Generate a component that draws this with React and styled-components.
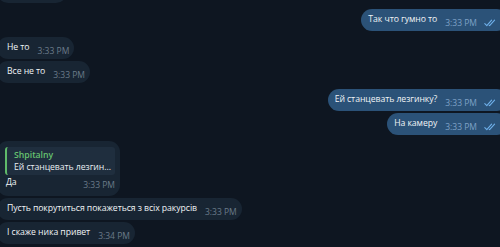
import React from "react";
import styled, { createGlobalStyle } from "styled-components";

const Global = createGlobalStyle`
  html, body { margin: 0; padding: 0; background: #0e1621; }
  body { width: 500px; height: 247px; overflow: hidden; }
  * { box-sizing: border-box; }
`;

const Chat = styled.div`
  width: 500px;
  height: 247px;
  overflow: hidden;
  background: #0e1621;
  display: flex;
  flex-direction: column;
  font-family: "Open Sans", "Noto Sans", sans-serif;
`;

const Row = styled.div`
  display: flex;
  justify-content: ${(p) => (p.$out ? "flex-end" : "flex-start")};
  margin-top: ${(p) => (p.$first ? "6px" : "2px")};
  margin-left: ${(p) => (p.$out ? "0" : "-3px")};
  margin-right: ${(p) => (p.$out ? "-8px" : "0")};
`;

const Bubble = styled.div`
  display: flex;
  align-items: flex-end;
  background: ${(p) => (p.$out ? "#2b5278" : "#182533")};
  border-radius: 11px;
  height: 22px;
  padding: ${(p) => (p.$out ? "0 11px 0 7px" : "0 5px 0 10px")};
`;

const Text = styled.span`
  color: #f0f3f6;
  font-size: 8.7px;
  letter-spacing: -0.07px;
  line-height: 13px;
  padding-bottom: 5px;
  white-space: nowrap;
`;

const Meta = styled.span`
  display: inline-flex;
  align-items: center;
  gap: 7px;
  margin-left: 8px;
  padding-bottom: 3px;
  font-size: 8.5px;
  line-height: 11px;
  color: ${(p) => (p.$out ? "#7ea2c6" : "#6b7b8a")};
  white-space: nowrap;
`;

const ReplyBubble = styled.div`
  display: flex;
  flex-direction: column;
  background: #182533;
  border-radius: 11px;
  padding: 6px 5px 3px 8px;
  width: 123px;
`;

const Quote = styled.div`
  background: #1f2e3e;
  border-left: 2px solid #5fba6a;
  border-radius: 3px;
  padding: 2px 4px 2px 7px;
  display: flex;
  flex-direction: column;
`;

const QuoteName = styled.span`
  color: #66c26f;
  font-size: 8.7px;
  font-weight: 600;
  line-height: 12px;
`;

const QuoteText = styled.span`
  color: #e8edf2;
  font-size: 8.7px;
  letter-spacing: -0.07px;
  line-height: 12px;
  white-space: nowrap;
`;

const ReplyFoot = styled.div`
  display: flex;
  justify-content: space-between;
  align-items: flex-end;
`;

const FootText = styled(Text)`
  padding-bottom: 4px;
  padding-top: 1px;
  padding-left: 1px;
`;

const Checks = () => (
  <svg width="13" height="8" viewBox="0 0 13 8" fill="none">
    <path d="M0.8 4.6 L2.8 6.6 L7.6 1.2" stroke="#6fb0ea" strokeWidth="1.1" strokeLinecap="round" strokeLinejoin="round" />
    <path d="M5.2 6.4 L5.6 6.6 L10.6 1.2" stroke="#6fb0ea" strokeWidth="1.1" strokeLinecap="round" strokeLinejoin="round" />
  </svg>
);

const messages = [
  { out: true, first: true, text: "Так что гумно то", time: "3:33 PM" },
  { out: false, first: true, text: "Не то", time: "3:33 PM" },
  { out: false, first: false, text: "Все не то", time: "3:33 PM" },
  { out: true, first: true, text: "Ей станцевать лезгинку?", time: "3:33 PM" },
  { out: true, first: false, text: "На камеру", time: "3:33 PM" },
];

const tail = [
  { text: "Пусть покрутиться покажеться з всіх ракурсів", time: "3:33 PM" },
  { text: "І скаже ника привет", time: "3:34 PM" },
];

const TopBubble = styled.div`
  width: 70px;
  height: 22px;
  margin-top: -19px;
  margin-left: -3px;
  background: #182533;
  border-radius: 11px;
`;

export default function App() {
  return (
    <>
      <Global />
      <Chat>
        <TopBubble />
        {messages.map((m, i) => (
          <Row key={i} $out={m.out} $first={m.first}>
            <Bubble $out={m.out}>
              <Text>{m.text}</Text>
              <Meta $out={m.out}>
                {m.time}
                {m.out && <Checks />}
              </Meta>
            </Bubble>
          </Row>
        ))}
        <Row $first>
          <ReplyBubble>
            <Quote>
              <QuoteName>Shpitalny</QuoteName>
              <QuoteText>Ей станцевать лезгин...</QuoteText>
            </Quote>
            <ReplyFoot>
              <FootText>Да</FootText>
              <Meta>3:33 PM</Meta>
            </ReplyFoot>
          </ReplyBubble>
        </Row>
        {tail.map((m, i) => (
          <Row key={i}>
            <Bubble>
              <Text>{m.text}</Text>
              <Meta>{m.time}</Meta>
            </Bubble>
          </Row>
        ))}
      </Chat>
    </>
  );
}
